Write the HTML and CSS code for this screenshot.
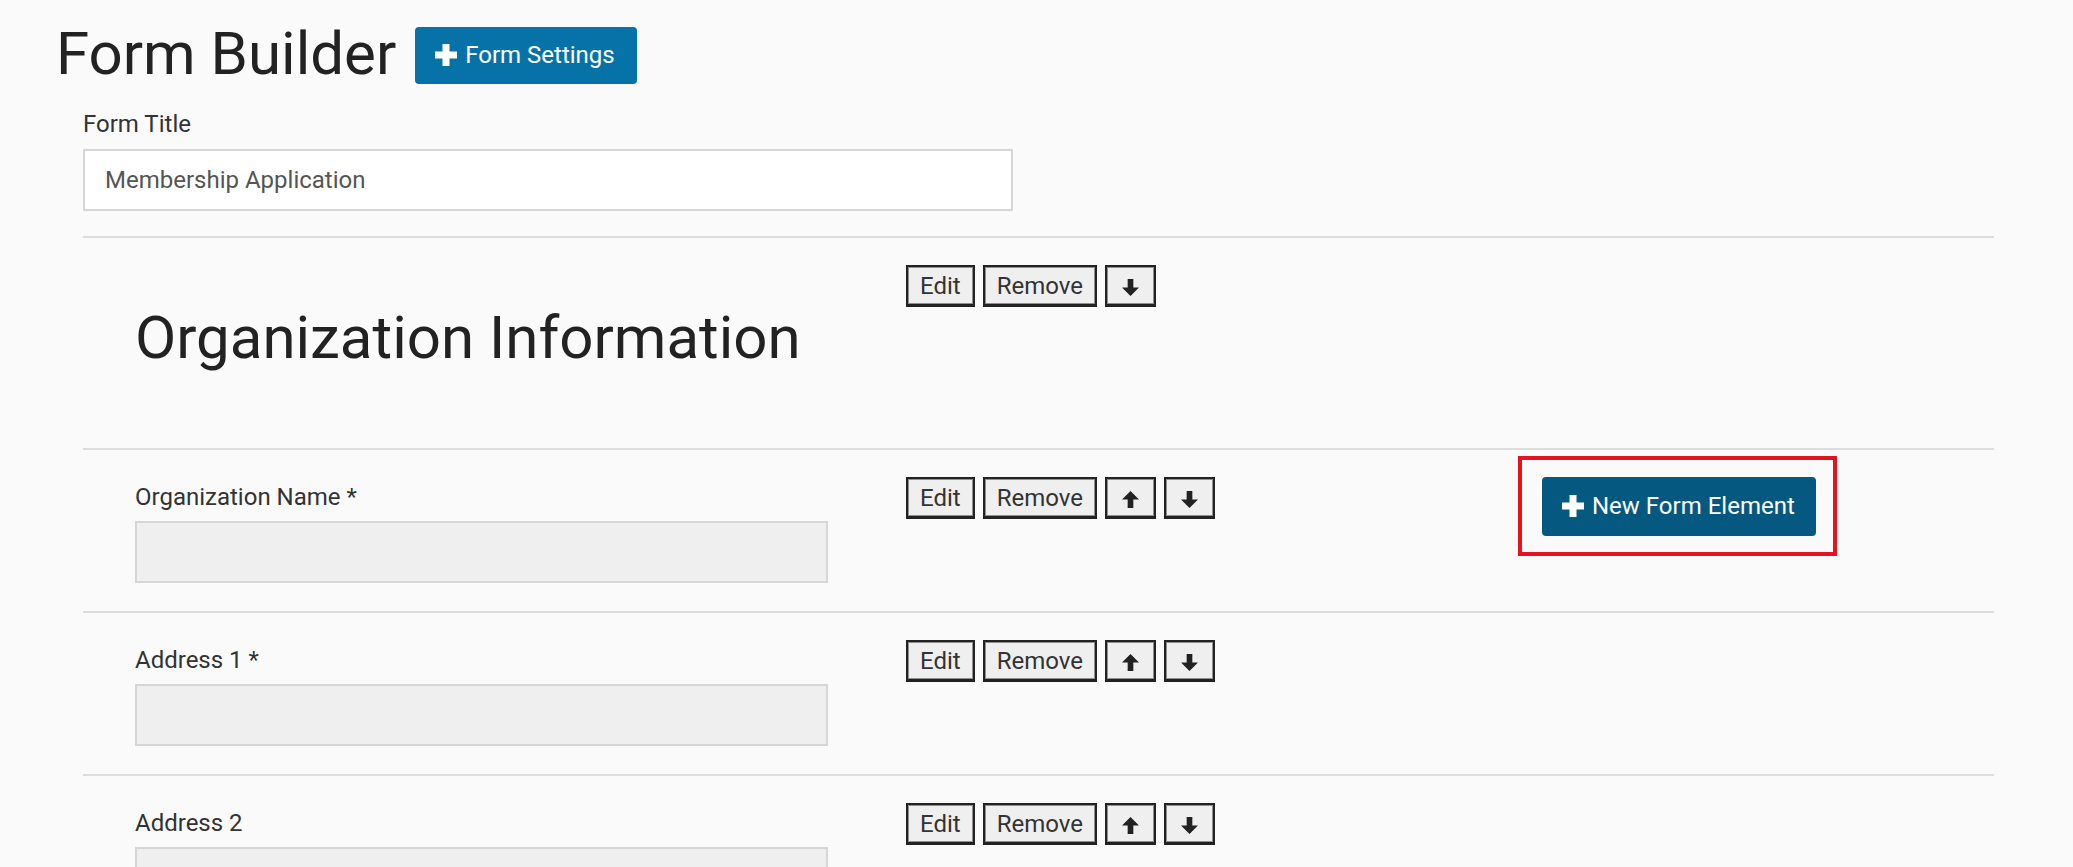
FILE: index.html
```html
<!DOCTYPE html>
<html lang="en">
<head>
<meta charset="utf-8">
<title>Form Builder</title>
<link rel="stylesheet" href="styles.css">
</head>
<body>
<div class="page">
  <header class="page-header">
    <h1 class="page-title">Form Builder</h1>
    <button class="btn btn-primary" type="button">
      <svg class="icon-plus" viewBox="0 0 22 22" aria-hidden="true"><path d="M7.5 0h7v7.5H22v7h-7.5V22h-7v-7.5H0v-7h7.5z"/></svg>
      <span>Form Settings</span>
    </button>
  </header>

  <section class="form">
    <div class="form-title">
      <label class="field-label">Form Title</label>
      <input class="title-input" type="text" value="Membership Application">
    </div>

    <div class="element-row">
      <div class="element-main">
        <h2 class="section-heading">Organization Information</h2>
      </div>
      <div class="element-actions">
        <button class="btn-tool" type="button">Edit</button>
        <button class="btn-tool" type="button">Remove</button>
        <button class="btn-tool btn-icon" type="button" aria-label="Move down">
          <svg class="icon-arrow" viewBox="0 0 18 18" aria-hidden="true"><polygon points="6,0 12,0 12,9 18,9 9,18 0,9 6,9"/></svg>
        </button>
      </div>
      <div class="element-extra"></div>
    </div>

    <div class="element-row">
      <div class="element-main">
        <label class="field-label">Organization Name *</label>
        <div class="field-input"></div>
      </div>
      <div class="element-actions">
        <button class="btn-tool" type="button">Edit</button>
        <button class="btn-tool" type="button">Remove</button>
        <button class="btn-tool btn-icon" type="button" aria-label="Move up">
          <svg class="icon-arrow" viewBox="0 0 18 18" aria-hidden="true"><polygon points="9,0 18,9 12,9 12,18 6,18 6,9 0,9"/></svg>
        </button>
        <button class="btn-tool btn-icon" type="button" aria-label="Move down">
          <svg class="icon-arrow" viewBox="0 0 18 18" aria-hidden="true"><polygon points="6,0 12,0 12,9 18,9 9,18 0,9 6,9"/></svg>
        </button>
      </div>
      <div class="element-extra">
        <div class="highlight">
          <button class="btn btn-dark" type="button">
            <svg class="icon-plus" viewBox="0 0 22 22" aria-hidden="true"><path d="M7.5 0h7v7.5H22v7h-7.5V22h-7v-7.5H0v-7h7.5z"/></svg>
            <span>New Form Element</span>
          </button>
        </div>
      </div>
    </div>

    <div class="element-row">
      <div class="element-main">
        <label class="field-label">Address 1 *</label>
        <div class="field-input"></div>
      </div>
      <div class="element-actions">
        <button class="btn-tool" type="button">Edit</button>
        <button class="btn-tool" type="button">Remove</button>
        <button class="btn-tool btn-icon" type="button" aria-label="Move up">
          <svg class="icon-arrow" viewBox="0 0 18 18" aria-hidden="true"><polygon points="9,0 18,9 12,9 12,18 6,18 6,9 0,9"/></svg>
        </button>
        <button class="btn-tool btn-icon" type="button" aria-label="Move down">
          <svg class="icon-arrow" viewBox="0 0 18 18" aria-hidden="true"><polygon points="6,0 12,0 12,9 18,9 9,18 0,9 6,9"/></svg>
        </button>
      </div>
      <div class="element-extra"></div>
    </div>

    <div class="element-row">
      <div class="element-main">
        <label class="field-label">Address 2</label>
        <div class="field-input"></div>
      </div>
      <div class="element-actions">
        <button class="btn-tool" type="button">Edit</button>
        <button class="btn-tool" type="button">Remove</button>
        <button class="btn-tool btn-icon" type="button" aria-label="Move up">
          <svg class="icon-arrow" viewBox="0 0 18 18" aria-hidden="true"><polygon points="9,0 18,9 12,9 12,18 6,18 6,9 0,9"/></svg>
        </button>
        <button class="btn-tool btn-icon" type="button" aria-label="Move down">
          <svg class="icon-arrow" viewBox="0 0 18 18" aria-hidden="true"><polygon points="6,0 12,0 12,9 18,9 9,18 0,9 6,9"/></svg>
        </button>
      </div>
      <div class="element-extra"></div>
    </div>
  </section>
</div>
</body>
</html>
```

FILE: styles.css
```css
html, body {
  margin: 0;
  background: #fafafa;
}

body {
  font-family: Roboto, "Noto Sans", "Liberation Sans", sans-serif;
  color: #333;
  overflow: hidden;
}

.page {
  padding: 18px 52px 0 56px;
}

.page-header {
  display: flex;
  align-items: flex-start;
  gap: 19px;
}

.page-title {
  margin: 3px 0 -3px;
  font-size: 60px;
  line-height: 66px;
  font-weight: 400;
  color: #222;
}

.btn {
  display: inline-flex;
  align-items: center;
  gap: 8px;
  border: 0;
  border-radius: 4px;
  color: #fff;
  font-family: Roboto, "Noto Sans", sans-serif;
  font-size: 24px;
  line-height: 34px;
  font-weight: 400;
  cursor: pointer;
}

.btn-primary {
  margin-top: 9px;
  padding: 11px 22px 12px 20px;
  background: #0772a7;
}

.btn-dark {
  padding: 12px 21px 13px 20px;
  background: #05587f;
}

.icon-plus {
  width: 22px;
  height: 22px;
  fill: #fff;
  flex: none;
}

.form {
  margin: 26px 27px 0;
}

.form-title {
  margin-bottom: 25px;
}

.field-label {
  display: block;
  font-size: 24px;
  line-height: 28px;
  color: #333;
  margin-bottom: 10px;
}

.form-title .field-label {
  margin-bottom: 11px;
}

.title-input {
  box-sizing: border-box;
  display: block;
  width: 930px;
  height: 62px;
  margin: 0;
  padding: 0 20px;
  border: 2px solid #d6d6d6;
  background: #fff;
  font-family: Roboto, "Noto Sans", sans-serif;
  font-size: 24px;
  color: #555;
  outline: none;
}

.element-row {
  display: grid;
  grid-template-columns: 771px 636px 1fr;
  padding: 27px 0 28px 52px;
  border-top: 2px solid #dcdcdc;
}

.element-main {
  padding-top: 6px;
}

.section-heading {
  margin: 34px 0 49px;
  font-size: 60px;
  line-height: 66px;
  font-weight: 400;
  color: #222;
}

.field-input {
  box-sizing: border-box;
  width: 693px;
  height: 62px;
  border: 2px solid #d6d6d6;
  background: #efefef;
}

.element-actions {
  display: flex;
  align-items: flex-start;
  gap: 8px;
}

.btn-tool {
  box-sizing: border-box;
  display: inline-flex;
  align-items: center;
  justify-content: center;
  height: 42px;
  margin: 0;
  padding: 4px 12px 3px;
  border: 2px solid #222;
  border-bottom-width: 3px;
  box-shadow: inset 0 0 0 1px #8f8f8f;
  background: #efefef;
  color: #333;
  font-family: Roboto, "Noto Sans", sans-serif;
  font-size: 24px;
  line-height: 28px;
  border-radius: 0;
  cursor: pointer;
}

.btn-icon {
  width: 51px;
  padding-left: 0;
  padding-right: 0;
}

.icon-arrow {
  width: 17px;
  height: 17px;
  margin-top: 2px;
  fill: #222;
}

.element-extra {
  display: flex;
  align-items: flex-start;
}

.highlight {
  position: relative;
  display: inline-block;
}

.highlight::after {
  content: "";
  position: absolute;
  left: -24px;
  top: -21px;
  right: -21px;
  bottom: -20px;
  border: 4px solid #e5121f;
  pointer-events: none;
}
```
